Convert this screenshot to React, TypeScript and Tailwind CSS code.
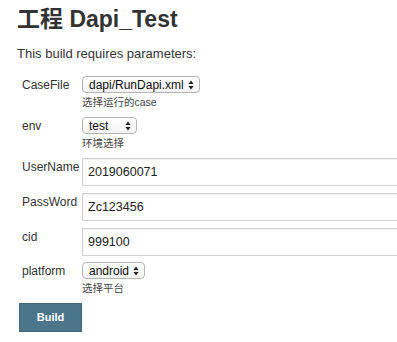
import type { ReactNode } from "react";

const FONT = {
  fontFamily:
    '"Liberation Sans", Arial, "Noto Sans CJK SC", sans-serif',
};

function Arrows() {
  return (
    <svg width="6" height="10" viewBox="0 0 6 10" className="shrink-0">
      <path d="M3 0.5 L5.6 4 L0.4 4 Z" fill="#222" />
      <path d="M3 9.5 L5.6 6 L0.4 6 Z" fill="#222" />
    </svg>
  );
}

function FakeSelect({ value, width }: { value: string; width: string }) {
  return (
    <div
      className={`flex items-center justify-between h-[17px] ${width} pl-[6px] pr-[5px] rounded-[4px] border border-[#b5b5b5] bg-gradient-to-b from-white to-[#f3f3f3] text-[12px] leading-none text-[#111]`}
    >
      <span>{value}</span>
      <Arrows />
    </div>
  );
}

function Hint({ children }: { children: ReactNode }) {
  return (
    <div className="mt-[3px] text-[10.5px] leading-[13px] text-[#444]">
      {children}
    </div>
  );
}

function Row({
  label,
  children,
  className = "",
}: {
  label: string;
  children: ReactNode;
  className?: string;
}) {
  return (
    <div className={`flex ${className}`}>
      <div className="w-[60px] shrink-0 pt-[2px] text-[12px] leading-[14px] text-[#333]">
        {label}
      </div>
      <div className="flex-1 min-w-0">{children}</div>
    </div>
  );
}

function TextField({ value }: { value: string }) {
  return (
    <div className="h-[28px] w-[330px] border border-[#d0d0d0] shadow-[inset_0_1px_1px_rgba(0,0,0,0.06)] bg-white pl-[5px] flex items-center text-[12.5px] text-[#222]">
      {value}
    </div>
  );
}

export default function App() {
  return (
    <div
      style={FONT}
      className="w-[397px] h-[342px] overflow-hidden bg-white pl-[17px] pt-[5px]"
    >
      <h1 className="text-[23px] leading-[28px] font-bold text-[#333]">
        工程 Dapi_Test
      </h1>
      <p className="mt-[13px] text-[13px] leading-[16px] text-[#333]">
        This build requires parameters:
      </p>

      <div className="mt-[14px] pl-[5px]">
        <Row label="CaseFile">
          <FakeSelect value="dapi/RunDapi.xml" width="w-[118px]" />
          <Hint>选择运行的case</Hint>
        </Row>
        <Row label="env" className="mt-[8px]">
          <FakeSelect value="test" width="w-[55px]" />
          <Hint>环境选择</Hint>
        </Row>
        <Row label="UserName" className="mt-[8px]">
          <TextField value="2019060071" />
        </Row>
        <Row label="PassWord" className="mt-[7px]">
          <TextField value="Zc123456" />
        </Row>
        <Row label="cid" className="mt-[7px]">
          <TextField value="999100" />
        </Row>
        <Row label="platform" className="mt-[6px]">
          <FakeSelect value="android" width="w-[63px]" />
          <Hint>选择平台</Hint>
        </Row>
      </div>

      <button
        type="button"
        className="mt-[8px] ml-[2px] w-[63px] h-[29px] bg-[#4b758b] border border-[#40687d] text-white text-[11px] font-bold"
      >
        Build
      </button>
    </div>
  );
}
